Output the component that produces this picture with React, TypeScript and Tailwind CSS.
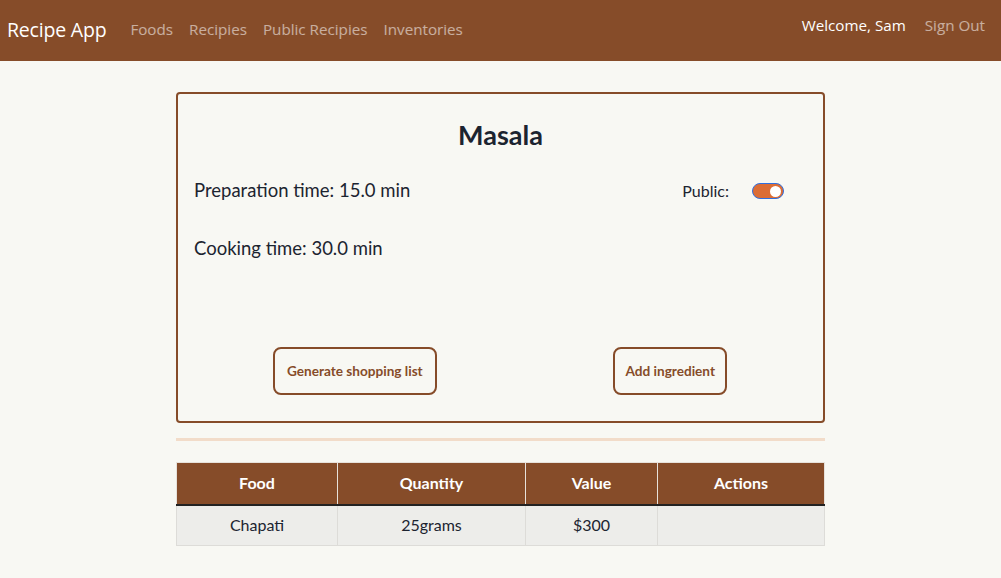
import React from 'react';

const rows = [{ food: 'Chapati', quantity: '25grams', value: '$300' }];

export default function App() {
  return (
    <div className="min-h-screen bg-[#f8f8f3]" style={{ fontFamily: '"Open Sans", "Noto Sans", sans-serif' }}>
      {/* Navbar */}
      <nav className="h-[61px] bg-[#864c29] flex items-center justify-between pl-[7px] pr-[16px]">
        <div className="flex items-center -mt-[2px]">
          <span className="text-[19.5px] text-white mr-[24px] tracking-[-0.2px]">Recipe App</span>
          <div className="flex items-center gap-[16px] text-[15.2px] text-white/55">
            <span>Foods</span>
            <span>Recipies</span>
            <span>Public Recipies</span>
            <span>Inventories</span>
          </div>
        </div>
        <div className="flex items-center gap-[19px] text-[15.2px] -mt-[11px]">
          <span className="text-white">Welcome, Sam</span>
          <span className="text-white/55">Sign Out</span>
        </div>
      </nav>

      <div className="w-[649px] mx-auto pt-[31px]" style={{ fontFamily: 'Lato, "Noto Sans", sans-serif' }}>
        {/* Recipe card */}
        <div className="h-[331px] border-2 border-[#864c29] rounded-[4px] px-[16px] pt-[25px] flex flex-col text-[#1c2430]">
          <h1 className="text-center text-[27px] font-bold leading-[1.2]">Masala</h1>
          <div className="flex items-center justify-between mt-[26px]">
            <span className="text-[18.5px]">Preparation time: 15.0 min</span>
            <div className="flex items-center mr-[23px]">
              <span className="text-[16px] mr-[23px]">Public:</span>
              <div className="w-[32px] h-[16px] rounded-full bg-[#dc6d35] border border-[#2f6fe0] flex items-center justify-end pr-[2px]">
                <div className="w-[11px] h-[11px] rounded-full bg-white" />
              </div>
            </div>
          </div>
          <div className="text-[18.5px] mt-[30px]">Cooking time: 30.0 min</div>
          <div className="flex justify-between mt-[84px] pl-[79px] pr-[80px]">
            <button className="h-[48px] px-[12px] border-2 border-[#864c29] rounded-[8px] text-[13.6px] font-bold text-[#864c29]">
              Generate shopping list
            </button>
            <button className="h-[48px] px-[10px] border-2 border-[#864c29] rounded-[8px] text-[13.6px] font-bold text-[#864c29]">
              Add ingredient
            </button>
          </div>
        </div>

        <div className="h-[3px] bg-[#f2dcc9] mt-[15px]" />

        {/* Ingredients table */}
        <table className="w-full mt-[21px] border-collapse text-[16px]">
          <thead>
            <tr className="bg-[#864c29] text-white h-[42px] border-b-2 border-[#222]">
              <th className="w-[161px] font-bold border border-[#e7e1da] border-b-[#222]">Food</th>
              <th className="w-[188px] font-bold border border-[#e7e1da] border-b-[#222]">Quantity</th>
              <th className="w-[132px] font-bold border border-[#e7e1da] border-b-[#222]">Value</th>
              <th className="font-bold border border-[#e7e1da] border-b-[#222]">Actions</th>
            </tr>
          </thead>
          <tbody>
            {rows.map((r) => (
              <tr key={r.food} className="bg-[#ededea] h-[41px] text-[#1c2430]">
                <td className="text-center border border-[#dddcd8]">{r.food}</td>
                <td className="text-center border border-[#dddcd8]">{r.quantity}</td>
                <td className="text-center border border-[#dddcd8]">{r.value}</td>
                <td className="border border-[#dddcd8]"></td>
              </tr>
            ))}
          </tbody>
        </table>
      </div>
    </div>
  );
}
